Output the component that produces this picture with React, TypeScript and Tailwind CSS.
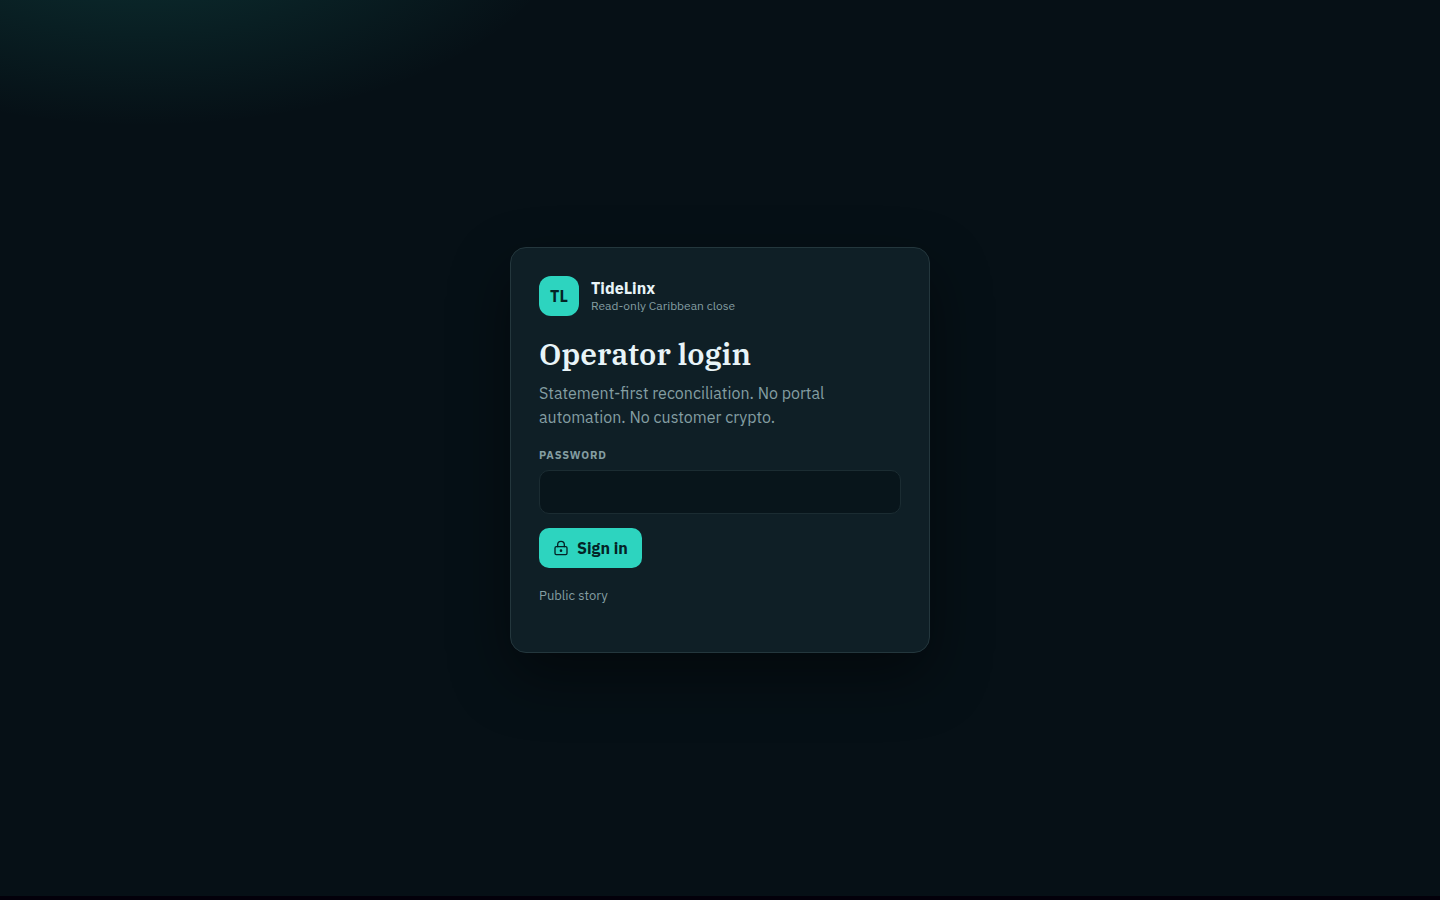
import { LockKeyhole } from 'lucide-react';

function Brand() {
  return (
    <div className="flex items-center gap-3">
      <div className="grid size-10 place-items-center rounded-xl bg-[#2dd4bf] font-bold text-[#042326]">
        TL
      </div>
      <div>
        <div className="font-bold leading-5 text-[#e8f4f8]">TideLinx</div>
        <div className="text-xs leading-4 text-[#849ea2]">Read-only Caribbean close</div>
      </div>
    </div>
  );
}

export default function App() {
  return (
    <main className="flex min-h-screen items-center justify-center border-b-4 border-[#03000a] bg-[#061016] bg-[radial-gradient(900px_450px_at_10%_-10%,rgba(45,212,191,0.18),transparent_48%)] px-4 pt-1 font-['IBM_Plex_Sans',Roboto,sans-serif] text-base">
      <section className="w-full max-w-[420px] rounded-2xl border border-[#24373d] bg-[#0f1f26] p-7 shadow-[0_24px_60px_rgba(0,0,0,0.45)]">
        <Brand />

        <h1 className="mt-5 font-['IBM_Plex_Serif','Liberation_Serif',serif] text-[30px] font-semibold leading-9 text-[#e8f4f8]">
          Operator login
        </h1>
        <p className="mt-[9px] leading-6 text-[#849ea2]">
          Statement-first reconciliation. No portal automation. No customer crypto.
        </p>

        <form onSubmit={(e) => e.preventDefault()}>
          <label
            htmlFor="password"
            className="mt-[18px] block text-[11px] font-bold uppercase leading-4 tracking-[0.08em] text-[#849ea2]"
          >
            Password
          </label>
          <input
            id="password"
            name="password"
            type="password"
            className="mt-[7px] block h-11 w-full rounded-[10px] border border-[#1b2c32] bg-[#08151b] px-3 text-[#e8f4f8] outline-none focus:border-[#2dd4bf]"
          />
          <button
            type="submit"
            className="mt-[14px] inline-flex h-10 cursor-pointer items-center gap-2 rounded-[10px] bg-[#2dd4bf] px-[14px] font-bold text-[#042326]"
          >
            <LockKeyhole size={16} />
            Sign in
          </button>
        </form>

        <p className="my-4 text-[13px] leading-6 text-[#849ea2]">
          <a href="#story">Public story</a>
        </p>
      </section>
    </main>
  );
}
